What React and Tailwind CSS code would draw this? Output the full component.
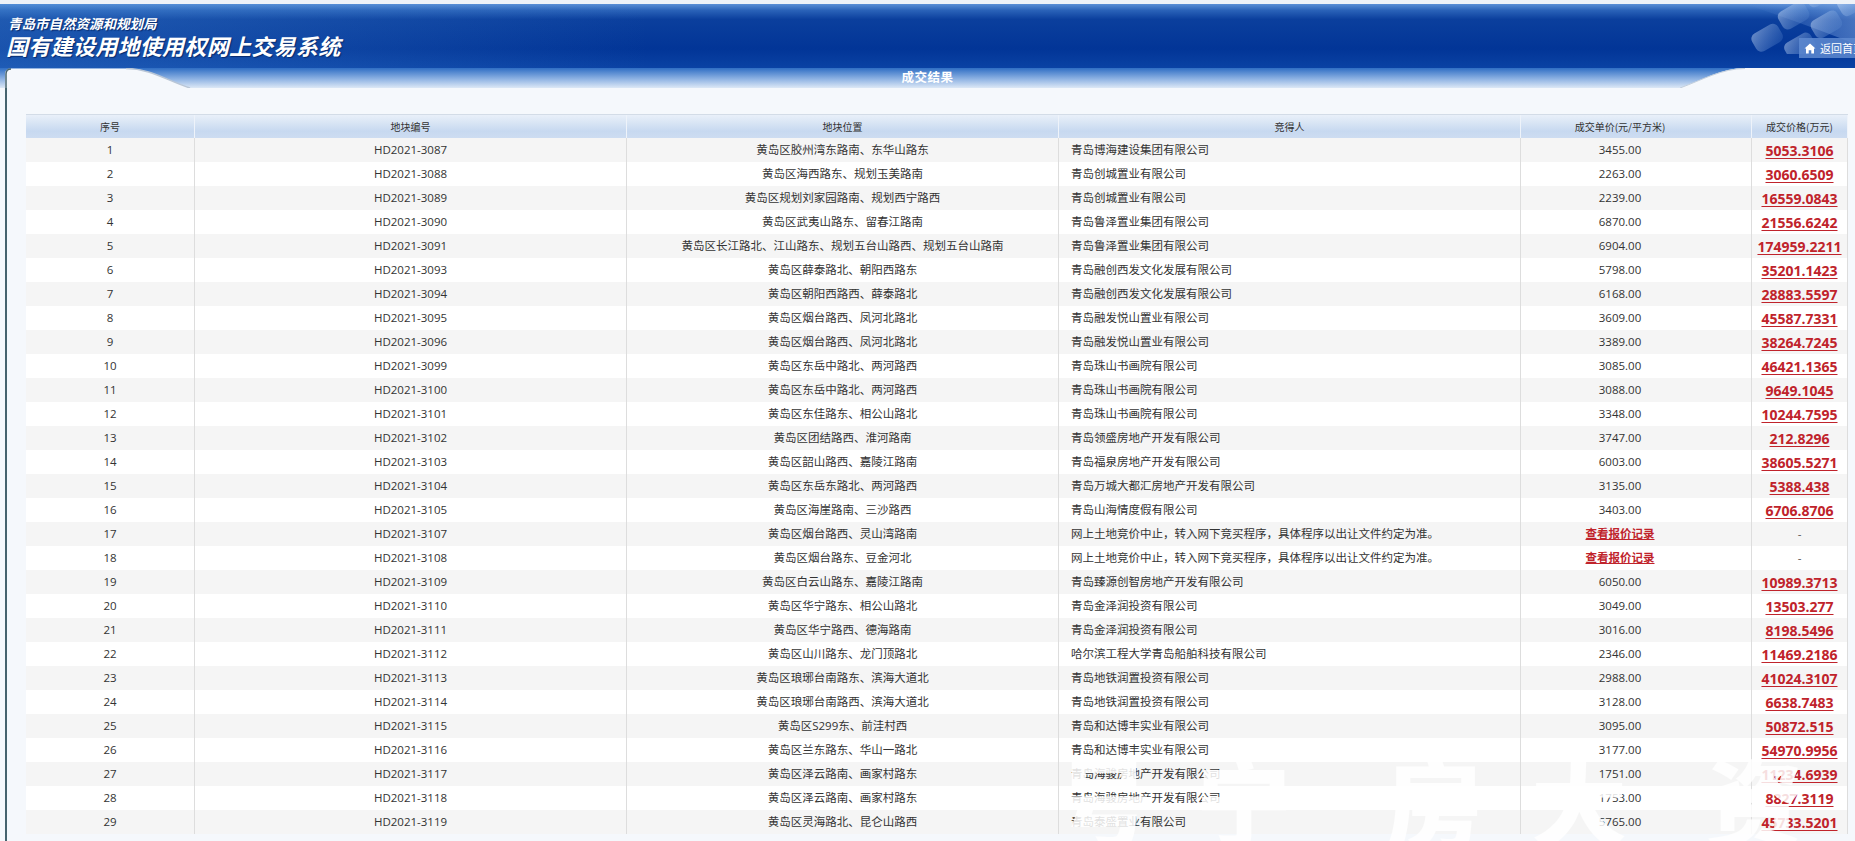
import React from 'react';

const rows = [
  ['1', 'HD2021-3087', '黄岛区胶州湾东路南、东华山路东', '青岛博海建设集团有限公司', '3455.00', '5053.3106'],
  ['2', 'HD2021-3088', '黄岛区海西路东、规划玉美路南', '青岛创城置业有限公司', '2263.00', '3060.6509'],
  ['3', 'HD2021-3089', '黄岛区规划刘家园路南、规划西宁路西', '青岛创城置业有限公司', '2239.00', '16559.0843'],
  ['4', 'HD2021-3090', '黄岛区武夷山路东、留春江路南', '青岛鲁泽置业集团有限公司', '6870.00', '21556.6242'],
  ['5', 'HD2021-3091', '黄岛区长江路北、江山路东、规划五台山路西、规划五台山路南', '青岛鲁泽置业集团有限公司', '6904.00', '174959.2211'],
  ['6', 'HD2021-3093', '黄岛区薛泰路北、朝阳西路东', '青岛融创西发文化发展有限公司', '5798.00', '35201.1423'],
  ['7', 'HD2021-3094', '黄岛区朝阳西路西、薛泰路北', '青岛融创西发文化发展有限公司', '6168.00', '28883.5597'],
  ['8', 'HD2021-3095', '黄岛区烟台路西、凤河北路北', '青岛融发悦山置业有限公司', '3609.00', '45587.7331'],
  ['9', 'HD2021-3096', '黄岛区烟台路西、凤河北路北', '青岛融发悦山置业有限公司', '3389.00', '38264.7245'],
  ['10', 'HD2021-3099', '黄岛区东岳中路北、两河路西', '青岛珠山书画院有限公司', '3085.00', '46421.1365'],
  ['11', 'HD2021-3100', '黄岛区东岳中路北、两河路西', '青岛珠山书画院有限公司', '3088.00', '9649.1045'],
  ['12', 'HD2021-3101', '黄岛区东佳路东、相公山路北', '青岛珠山书画院有限公司', '3348.00', '10244.7595'],
  ['13', 'HD2021-3102', '黄岛区团结路西、淮河路南', '青岛领盛房地产开发有限公司', '3747.00', '212.8296'],
  ['14', 'HD2021-3103', '黄岛区韶山路西、嘉陵江路南', '青岛福泉房地产开发有限公司', '6003.00', '38605.5271'],
  ['15', 'HD2021-3104', '黄岛区东岳东路北、两河路西', '青岛万城大都汇房地产开发有限公司', '3135.00', '5388.438'],
  ['16', 'HD2021-3105', '黄岛区海崖路南、三沙路西', '青岛山海情度假有限公司', '3403.00', '6706.8706'],
  ['17', 'HD2021-3107', '黄岛区烟台路西、灵山湾路南', null, null, null],
  ['18', 'HD2021-3108', '黄岛区烟台路东、豆金河北', null, null, null],
  ['19', 'HD2021-3109', '黄岛区白云山路东、嘉陵江路南', '青岛臻源创智房地产开发有限公司', '6050.00', '10989.3713'],
  ['20', 'HD2021-3110', '黄岛区华宁路东、相公山路北', '青岛金泽润投资有限公司', '3049.00', '13503.277'],
  ['21', 'HD2021-3111', '黄岛区华宁路西、德海路南', '青岛金泽润投资有限公司', '3016.00', '8198.5496'],
  ['22', 'HD2021-3112', '黄岛区山川路东、龙门顶路北', '哈尔滨工程大学青岛船舶科技有限公司', '2346.00', '11469.2186'],
  ['23', 'HD2021-3113', '黄岛区琅琊台南路东、滨海大道北', '青岛地铁润置投资有限公司', '2988.00', '41024.3107'],
  ['24', 'HD2021-3114', '黄岛区琅琊台南路西、滨海大道北', '青岛地铁润置投资有限公司', '3128.00', '6638.7483'],
  ['25', 'HD2021-3115', '黄岛区S299东、前洼村西', '青岛和达博丰实业有限公司', '3095.00', '50872.515'],
  ['26', 'HD2021-3116', '黄岛区兰东路东、华山一路北', '青岛和达博丰实业有限公司', '3177.00', '54970.9956'],
  ['27', 'HD2021-3117', '黄岛区泽云路南、画家村路东', '青岛海骏房地产开发有限公司', '1751.00', '11234.6939'],
  ['28', 'HD2021-3118', '黄岛区泽云路南、画家村路东', '青岛海骏房地产开发有限公司', '1753.00', '8827.3119'],
  ['29', 'HD2021-3119', '黄岛区灵海路北、昆仑山路西', '青岛泰盛置业有限公司', '5765.00', '45733.5201'],
];

const cols = 'grid grid-cols-[169px_432px_432px_462px_231px_96px]';

const HeaderDeco = () => (
  <svg className="absolute right-0 top-0" width="140" height="50" viewBox="0 0 140 50">
    <defs>
      <linearGradient id="tile" x1="0" y1="0" x2="1" y2="1">
        <stop offset="0" stopColor="#cfe0f7" stopOpacity="0.5" />
        <stop offset="1" stopColor="#5f8fd4" stopOpacity="0.2" />
      </linearGradient>
      <linearGradient id="glow" x1="0" y1="0" x2="1" y2="0">
        <stop offset="0" stopColor="#6f9be0" stopOpacity="0" />
        <stop offset="1" stopColor="#8fb4ea" stopOpacity="0.45" />
      </linearGradient>
    </defs>
    <path d="M30 0 L140 0 L140 40 Q90 20 30 0 Z" fill="url(#glow)" />
    <g transform="rotate(-30 80 20)">
      <rect x="34" y="8" width="30" height="20" rx="6" fill="url(#tile)" />
      <rect x="68" y="2" width="30" height="20" rx="6" fill="url(#tile)" />
      <rect x="102" y="-4" width="30" height="20" rx="6" fill="url(#tile)" />
      <rect x="58" y="32" width="30" height="20" rx="6" fill="url(#tile)" />
      <rect x="92" y="26" width="30" height="20" rx="6" fill="url(#tile)" />
      <rect x="126" y="20" width="30" height="20" rx="6" fill="url(#tile)" />
    </g>
  </svg>
);

const Band = () => (
  <div className="relative h-[20px] flex items-center justify-center">
    <svg className="absolute inset-0" width="1855" height="20" viewBox="0 0 1855 20">
      <defs>
        <linearGradient id="band" x1="0" y1="0" x2="0" y2="1">
          <stop offset="0" stopColor="#2f6ec4" />
          <stop offset="0.55" stopColor="#8fb3e3" />
          <stop offset="1" stopColor="#dce8f6" />
        </linearGradient>
      </defs>
      <rect x="0" y="0" width="1855" height="20" fill="url(#band)" />
      <path d="M5 20 L5 6 Q5 0.5 11 0.5 L126 0.5 C150 0.5 166 12 190 20 Z" fill="#f5f8fc" />
      <path d="M126 0.5 C150 0.5 166 12 190 20" fill="none" stroke="#b9c6d6" strokeWidth="1.5" />
      <path d="M6 20 L6 6 Q6 1 11 1" fill="none" stroke="#46636e" strokeWidth="1.5" />
      <path d="M1855 0 L1745 0 C1722 0 1702 12 1680 20 L1855 20 Z" fill="#f5f8fc" />
      <path d="M1745 0.5 C1722 0.5 1702 12 1680 20" fill="none" stroke="#c3cfdc" strokeWidth="1" />
    </svg>
    <span className="relative text-[12.5px] font-bold text-white tracking-[0.5px]">成交结果</span>
  </div>
);

export default function App() {
  return (
    <div className="relative w-[1855px] h-[841px] overflow-hidden bg-[#f5f8fc] font-['Open_Sans','Noto_Sans_CJK_SC',sans-serif] text-[#333]">
      <header className="relative h-[68px]">
        <div className="h-[4px] bg-[#eef2f8]" />
        <div className="relative h-[64px] bg-[linear-gradient(to_bottom,#5a8fd6_0%,#2a62b8_10%,#0b3f9d_24%,#023597_70%,#0a42a4_100%)]">
          <div className="absolute inset-0 bg-[linear-gradient(to_right,rgba(70,140,215,0.35),rgba(0,0,0,0)_35%)]" />
          <div className="relative pl-[6px] pt-[11px] text-white font-['Noto_Sans_CJK_SC',sans-serif] italic font-bold [text-shadow:1px_1px_1px_#062a6e]">
            <div className="text-[13.5px] leading-[16px] pl-[2px]">青岛市自然资源和规划局</div>
            <div className="text-[22px] leading-[28px] tracking-[0.3px]">国有建设用地使用权网上交易系统</div>
          </div>
          <HeaderDeco />
          <div className="absolute left-[1799px] top-[34px] h-[20px] w-[80px] bg-[#5e8ad0]/85 flex items-center gap-[4px] pl-[5px] text-white text-[11px] font-['Noto_Sans_CJK_SC',sans-serif]">
            <svg width="12" height="11" viewBox="0 0 12 11">
              <path d="M6 0.5 L11.5 5.5 L10 5.5 L10 10.5 L7.3 10.5 L7.3 7.3 L4.7 7.3 L4.7 10.5 L2 10.5 L2 5.5 L0.5 5.5 Z" fill="#fff" />
            </svg>
            <span>返回首页</span>
          </div>
        </div>
      </header>

      <Band />

      <div className="ml-[5px] border-l-2 border-[#46636e] pl-[19px] pt-[26px] h-[753px]">
        <div className="w-[1822px]">
          <div className={`${cols} h-[24px] border-t border-[#d3dce7] bg-[linear-gradient(to_bottom,#e9f0f9,#c7d9f0_70%,#cddcf1)] text-[10px] text-[#333] font-['Noto_Sans_CJK_SC',sans-serif]`}>
            {['序号', '地块编号', '地块位置', '竞得人'].map((h) => (
              <div key={h} className="flex items-center justify-center border-r border-[#eef3fa]">{h}</div>
            ))}
            <div className="flex items-center justify-center pr-[32px] border-r border-[#eef3fa]">成交单价(元/平方米)</div>
            <div className="flex items-center justify-center border-r border-[#eef3fa]">成交价格(万元)</div>
          </div>
          {rows.map((r, i) => (
            <div key={r[0]} className={`${cols} h-[24px] text-[11.5px] ${i % 2 === 0 ? 'bg-[#f5f5f5]' : 'bg-white'}`}>
              <div className="flex items-center justify-center border-r border-[#dddddd]">{r[0]}</div>
              <div className="flex items-center justify-center border-r border-[#dddddd]">{r[1]}</div>
              <div className="flex items-center justify-center border-r border-[#dddddd]">{r[2]}</div>
              <div className="flex items-center pl-[12px] border-r border-[#dddddd] whitespace-nowrap">
                {r[3] ?? '网上土地竞价中止，转入网下竞买程序，具体程序以出让文件约定为准。'}
              </div>
              <div className="flex items-center justify-center pr-[32px] border-r border-[#dddddd]">
                {r[4] ?? <span className="text-[#c0232b] font-bold underline">查看报价记录</span>}
              </div>
              <div className="flex items-center justify-center border-r border-[#dddddd]">
                {r[5] ? (
                  <span className="text-[14px] font-bold text-[#c0232b] underline underline-offset-2">{r[5]}</span>
                ) : (
                  <span className="text-[#555]">-</span>
                )}
              </div>
            </div>
          ))}
        </div>
      </div>

      <div className="absolute left-[1056px] top-[744px] flex text-[96px] leading-[110px] font-black text-white/85 whitespace-nowrap font-['Noto_Sans_CJK_SC',sans-serif] pointer-events-none">
        <span>号</span>
        <span className="ml-[44px]">宁</span>
        <span className="ml-[94px]">房</span>
        <span className="ml-[49px]">大</span>
        <span className="ml-[79px]">资</span>
      </div>
    </div>
  );
}
